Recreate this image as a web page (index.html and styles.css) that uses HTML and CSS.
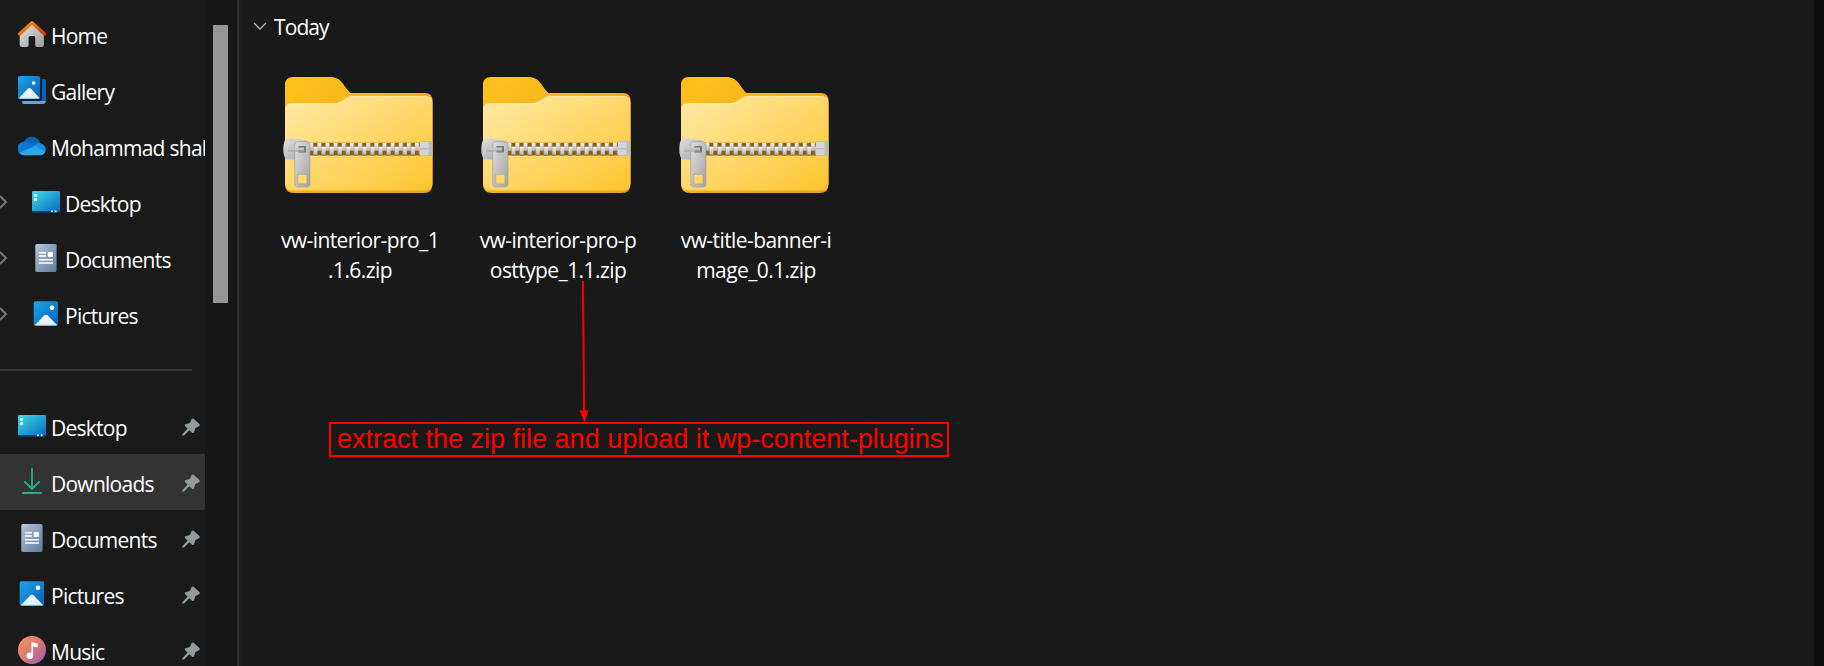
FILE: index.html
```html
<!DOCTYPE html>
<html lang="en">
<head>
    <meta charset="UTF-8">
    <title>Downloads</title>
    <link rel="stylesheet" href="styles.css">
</head>
<body>
    <!-- Shared icons -->
    <svg class="defs" width="0" height="0">
        <defs>
            <linearGradient id="g-roof" x1="0" y1="0" x2="1" y2="1"><stop offset="0" stop-color="#ff9a10"/><stop offset="1" stop-color="#d23c00"/></linearGradient>
            <linearGradient id="g-wall" x1="0" y1="0" x2="1" y2="1"><stop offset="0" stop-color="#e2e2e2"/><stop offset="1" stop-color="#9c9c9c"/></linearGradient>
            <linearGradient id="g-blue" x1="0" y1="0" x2="1" y2="1"><stop offset="0" stop-color="#20a4ea"/><stop offset="1" stop-color="#0560b4"/></linearGradient>
            <linearGradient id="g-hill" x1="0" y1="0" x2="0" y2="1"><stop offset="0" stop-color="#ffffff"/><stop offset="1" stop-color="#d6ebfb"/></linearGradient>
            <linearGradient id="g-desk" x1="0" y1="0" x2="1" y2="1"><stop offset="0" stop-color="#3ddbe4"/><stop offset="1" stop-color="#0b6ac6"/></linearGradient>
            <linearGradient id="g-doc" x1="0" y1="0" x2="1" y2="1"><stop offset="0" stop-color="#b4c6da"/><stop offset="1" stop-color="#5d7a9a"/></linearGradient>
            <linearGradient id="g-down" x1="0" y1="0" x2="1" y2="1"><stop offset="0" stop-color="#35c481"/><stop offset="1" stop-color="#10a293"/></linearGradient>
            <linearGradient id="g-music" x1="0" y1="0" x2="1" y2="1"><stop offset="0.1" stop-color="#f5915a"/><stop offset="0.6" stop-color="#cf7180"/><stop offset="1" stop-color="#9159b8"/></linearGradient>
            <linearGradient id="g-back" x1="0" y1="0" x2="1" y2="1"><stop offset="0" stop-color="#ffc21c"/><stop offset="1" stop-color="#e29f20"/></linearGradient>
            <linearGradient id="g-front" x1="0" y1="0" x2="1" y2="1"><stop offset="0" stop-color="#ffeaa6"/><stop offset="1" stop-color="#ffc530"/></linearGradient>
            <linearGradient id="g-metal" x1="0" y1="0" x2="1" y2="1"><stop offset="0" stop-color="#e0e0e0"/><stop offset="1" stop-color="#a2a2a2"/></linearGradient>
            <linearGradient id="g-tooth" x1="0" y1="0" x2="0" y2="1"><stop offset="0" stop-color="#f6f6f6"/><stop offset="1" stop-color="#b4b4b4"/></linearGradient>
            <pattern id="teeth" x="26.3" y="65.7" width="8.13" height="13" patternUnits="userSpaceOnUse">
                <rect width="8.13" height="13" fill="#8c6014"/>
                <rect width="4" height="8" fill="url(#g-tooth)"/>
                <rect x="4.1" y="4" width="4" height="8" fill="url(#g-tooth)"/>
            </pattern>
        </defs>

        <symbol id="home" viewBox="0 0 28 28">
            <path d="M14 4 25.900 15V25Q25.900 27 23.900 27H19Q17.200 27 17.200 25.200V17.500Q17.200 16 15.700 16H12.300Q10.600 16 10.600 17.500V25.200Q10.600 27 8.800 27H4Q1.700 27 1.700 24.700V14Z" fill="url(#g-wall)"/>
            <path d="M1.500 14 14 2.700 26.500 14" fill="none" stroke="url(#g-roof)" stroke-width="3.200" stroke-linecap="round" stroke-linejoin="round"/>
        </symbol>
        <symbol id="gallery" viewBox="0 0 28 28">
            <path d="M24 3h2q2 0 2 2v19q0 4-4 4H6q-2.500 0-2.500-3H22q2 0 2-2Z" fill="#0b61b5"/>
            <path d="M4.300 25H28q-.5 3-4 3H6q-2 0-1.700-3Z" fill="#6ba3d8"/>
            <rect width="22.300" height="23.300" rx="2" fill="url(#g-blue)"/>
            <path d="M1 22 10 12.600q1.400-1.300 2.800 0L21.500 22q-.5.700-1.500.700H2.500Q1.500 22.700 1 22Z" fill="url(#g-hill)"/>
            <circle cx="15.600" cy="7" r="1.800" fill="#fff"/>
            <path d="M23 2V22Q23 24 21 24H2" fill="none" stroke="#10202e" stroke-width="1.300"/>
        </symbol>
        <symbol id="cloud" viewBox="0 0 28 28">
            <path d="M4.500 12.500C7 6 10.500 4.700 14 4.700s7 2 8.500 7L16 18Z" fill="#0763b8"/>
            <path d="M6 9.800c5-.8 8 2.200 16 6.700l-8 6.800H6.200A6.700 6.700 0 0 1 6 9.800Z" fill="#0d78d6"/>
            <path d="M14 14.700c4-3 6-4 8-3.400 8 1.700 7.500 12-.500 12Z" fill="#1490e0"/>
            <path d="M1.800 20.500 17.500 13.900 27 20q-2 3.300-5.300 3.300H6.300q-3 0-4.500-2.800Z" fill="#29a8ec"/>
        </symbol>
        <symbol id="desktop" viewBox="0 0 28 28">
            <rect y="3" width="28" height="21.500" rx="1.300" fill="#084f86"/>
            <rect y="3" width="28" height="20" rx="1.300" fill="url(#g-desk)"/>
            <path d="M2.200 6h2.700v2.700H2.200ZM2.200 10.300h2.700V13H2.200ZM19 22.500h1.800v1.800H19ZM22.700 22.500h1.800v1.800h-1.800Z" fill="#fff"/>
        </symbol>
        <symbol id="document" viewBox="0 0 28 28">
            <rect x="3.300" width="21.300" height="28" rx="1.500" fill="url(#g-doc)"/>
            <path d="M7 8h7v1.400H7ZM7 11.300h7v1.400H7ZM15.800 8h5v5h-5ZM7 15h14v1.400H7ZM7 18.300h14v1.400H7Z" fill="#fff"/>
        </symbol>
        <symbol id="picture" viewBox="0 0 28 28">
            <rect x="1.700" y="1.300" width="24.300" height="24.700" rx="1.700" fill="url(#g-blue)"/>
            <path d="M3 24.900 12.300 15.600q1.700-1.500 3.400 0L25 24.900q-.5.600-1.500.600h-19Q3.500 25.500 3 24.900Z" fill="url(#g-hill)"/>
            <circle cx="20" cy="7.700" r="2.300" fill="#fff"/>
        </symbol>
        <symbol id="download" viewBox="0 0 28 28">
            <path d="M14 1V21M6.800 13.800 14 21 21.200 13.800" fill="none" stroke="#22b389" stroke-width="1.800" stroke-linecap="round" stroke-linejoin="round"/>
            <rect x="4" y="24" width="20" height="2" rx="1" fill="url(#g-down)"/>
        </symbol>
        <symbol id="music" viewBox="0 0 28 28">
            <circle cx="14" cy="14" r="14" fill="url(#g-music)"/>
            <circle cx="11.800" cy="19.700" r="3.200" fill="#fff"/>
            <path d="M13.400 5.500q3 2 6.300 1.900v3.800q-2.700 0-4.700-1V20h-1.600Z" fill="#fff"/>
        </symbol>
        <symbol id="pin" viewBox="0 0 18 18">
            <path d="M11.600.700 17.500 6.300Q18.300 7.400 17 8.200L13.400 10 12 14.200Q11.300 15.600 10 14.700L7.300 12.200 2.300 17.300Q.800 18.100.300 17.500T.700 15.700L5.600 10.600 3.200 8.200Q2.200 7 3.500 6.300L7.700 4.900 9.700 1.100Q10.500-.1 11.600.700Z" fill="#929b9f"/>
        </symbol>
        <symbol id="zip" viewBox="0 0 151 117">
            <path d="M2 8Q2 0 10 0H47C59 0 60 9 67.500 16H142Q149.500 16 149.500 24V107Q149.500 116 141 116H11Q2 116 2 107Z" fill="url(#g-back)"/>
            <path d="M2 33Q2 26.300 9 26.300H50C60 26.300 62 19 70 19H142Q149.500 19 149.500 26V106Q149.500 113.500 141 113.500H11Q2 113.500 2 106Z" fill="url(#g-front)"/>
            <path d="M2.700 32Q3 26.800 9 26.800H50C60 26.800 62 19.500 70 19.500H142Q147 19.500 148.700 24" fill="none" stroke="#fff0bd" stroke-opacity=".7"/>
            <rect x="26.300" y="65.700" width="111" height="13" fill="url(#teeth)"/>
            <rect x="137" y="64" width="12.500" height="15" fill="#bcbcbc"/>
            <path d="M137 65h8.500v6H137ZM137 72.500h8.500v5.500H137Z" fill="#d4d4d4"/>
            <path d="M3.500 61.300 22 63q4 1 5 5v9L13 82.500H3.500Q.3 80 .3 72T3.500 61.300Z" fill="url(#g-metal)"/>
            <path d="M15 64.700H24Q27 64.700 27 67.700V107Q27 110 24 110H14.700Q11.700 110 11.700 107V68Q11.700 64.700 15 64.700ZM14.700 97.300V107H24V97.300Z" fill="url(#g-metal)" fill-rule="evenodd" stroke="#999" stroke-width=".6"/>
            <rect x="15.500" y="69" width="7.500" height="6.500" fill="#777"/>
            <path d="M5 70.500H21V73.500H5Z" fill="#c4c4c4"/>
            <path d="M5 73.500H21V74.500H5Z" fill="#a2a2a2"/>
        </symbol>
    </svg>

    <div class="explorer">
        <nav class="sidebar">
            <div class="tree">
                <div class="row"><svg class="icon"><use href="#home"/></svg><span class="name">Home</span></div>
                <div class="row"><svg class="icon"><use href="#gallery"/></svg><span class="name">Gallery</span></div>
                <div class="row"><svg class="icon"><use href="#cloud"/></svg><span class="name account">Mohammad shal</span></div>
                <div class="row child"><svg class="expand" viewBox="0 0 8 14"><path d="M0 1 6 7 0 13"/></svg><svg class="icon"><use href="#desktop"/></svg><span class="name">Desktop</span></div>
                <div class="row child"><svg class="expand" viewBox="0 0 8 14"><path d="M0 1 6 7 0 13"/></svg><svg class="icon"><use href="#document"/></svg><span class="name">Documents</span></div>
                <div class="row child"><svg class="expand" viewBox="0 0 8 14"><path d="M0 1 6 7 0 13"/></svg><svg class="icon"><use href="#picture"/></svg><span class="name">Pictures</span></div>
                <div class="row separator"><hr></div>
                <div class="row"><svg class="icon"><use href="#desktop"/></svg><span class="name">Desktop</span><svg class="pin"><use href="#pin"/></svg></div>
                <div class="row selected"><svg class="icon"><use href="#download"/></svg><span class="name">Downloads</span><svg class="pin"><use href="#pin"/></svg></div>
                <div class="row"><svg class="icon"><use href="#document"/></svg><span class="name">Documents</span><svg class="pin"><use href="#pin"/></svg></div>
                <div class="row"><svg class="icon"><use href="#picture"/></svg><span class="name">Pictures</span><svg class="pin"><use href="#pin"/></svg></div>
                <div class="row"><svg class="icon"><use href="#music"/></svg><span class="name">Music</span><svg class="pin"><use href="#pin"/></svg></div>
            </div>
            <div class="scrollbar"><div class="thumb"></div></div>
        </nav>
        <div class="splitter"></div>
        <main class="files">
            <div class="group">
                <svg class="chevron" viewBox="0 0 14 8"><path d="M1 1 7 7 13 1"/></svg>
                <span>Today</span>
            </div>
            <div class="grid">
                <div class="file">
                    <svg class="zip"><use href="#zip"/></svg>
                    <div class="label">vw-interior-pro_1<br>.1.6.zip</div>
                </div>
                <div class="file">
                    <svg class="zip"><use href="#zip"/></svg>
                    <div class="label">vw-interior-pro-p<br>osttype_1.1.zip</div>
                </div>
                <div class="file">
                    <svg class="zip"><use href="#zip"/></svg>
                    <div class="label">vw-title-banner-i<br>mage_0.1.zip</div>
                </div>
            </div>
        </main>
        <div class="edge"></div>
    </div>

    <!-- Annotation over the file list -->
    <svg class="arrow" viewBox="0 0 12 142">
        <path d="M5 0 6 131" stroke="#f00" stroke-width="2"/>
        <path d="M1.500 129.500h9L6.500 141Z" fill="#f00"/>
    </svg>
    <div class="note">extract the zip file and upload it wp-content-plugins</div>
</body>
</html>
```
FILE: styles.css
```css
body {
    margin: 0;
    background: #191919;
    color: #fff;
    font-family: "Open Sans", "Noto Sans", sans-serif;
    font-size: 21px;
    height: 666px;
    overflow: hidden;
    position: relative;
}
.defs {
    position: absolute;
}
.explorer {
    display: flex;
    height: 666px;
}
.sidebar {
    display: flex;
    width: 237px;
    background: #171717;
}
.tree {
    width: 205px;
    padding-top: 6px;
    background: #1a1a1a;
    overflow: hidden;
    box-sizing: border-box;
}
.row {
    display: flex;
    align-items: center;
    height: 56px;
    padding-left: 18px;
    box-sizing: border-box;
    white-space: nowrap;
}
.child {
    padding-left: 0;
}
.selected {
    background: #333;
    border-radius: 0 2px 2px 0;
}
.icon {
    width: 28px;
    height: 28px;
    flex: none;
    margin-right: 5px;
}
.name {
    flex: 1;
    line-height: 28px;
    padding-top: 3px;
    letter-spacing: -0.75px;
}
.account {
    letter-spacing: -0.72px;
}
.expand {
    width: 8px;
    height: 14px;
    flex: none;
    margin-right: 24px;
}
.expand path {
    fill: none;
    stroke: #777;
    stroke-width: 2;
}
.pin {
    width: 18px;
    height: 18px;
    flex: none;
    margin-right: 5px;
    padding-top: 1px;
}
.separator {
    padding: 0;
}
.separator hr {
    width: 192px;
    height: 2px;
    margin: 0;
    border: none;
    background: #393939;
}
.scrollbar {
    padding: 25px 0 0 8px;
}
.thumb {
    width: 15px;
    height: 278px;
    background: #969696;
}
.splitter {
    width: 2px;
    background: #2c2c2c;
    border-right: 2px solid #212121;
}
.files {
    flex: 1;
}
.group {
    display: flex;
    align-items: center;
    gap: 7px;
    height: 54px;
    padding-left: 12px;
    letter-spacing: -0.9px;
}
.chevron {
    width: 14px;
    height: 8px;
    margin-bottom: 2px;
}
.chevron path {
    fill: none;
    stroke: #b5b5b5;
    stroke-width: 1.3;
}
.grid {
    display: flex;
    padding: 23px 0 0 18px;
}
.file {
    display: flex;
    flex-direction: column;
    align-items: center;
    width: 198px;
}
.zip {
    width: 151px;
    height: 117px;
}
.label {
    padding: 31px 0 0 4px;
    line-height: 30px;
    text-align: center;
    white-space: nowrap;
    letter-spacing: -0.58px;
}
.edge {
    width: 10px;
    background: #0e0e0e;
}
.arrow {
    position: absolute;
    left: 578px;
    top: 281px;
    width: 12px;
    height: 142px;
}
.note {
    position: absolute;
    left: 329px;
    top: 422px;
    width: 620px;
    height: 35px;
    border: 2px solid #f00;
    box-sizing: border-box;
    padding-left: 6px;
    color: #f00;
    font: 27px/30px "Liberation Sans", Arial, sans-serif;
    white-space: nowrap;
}
```
